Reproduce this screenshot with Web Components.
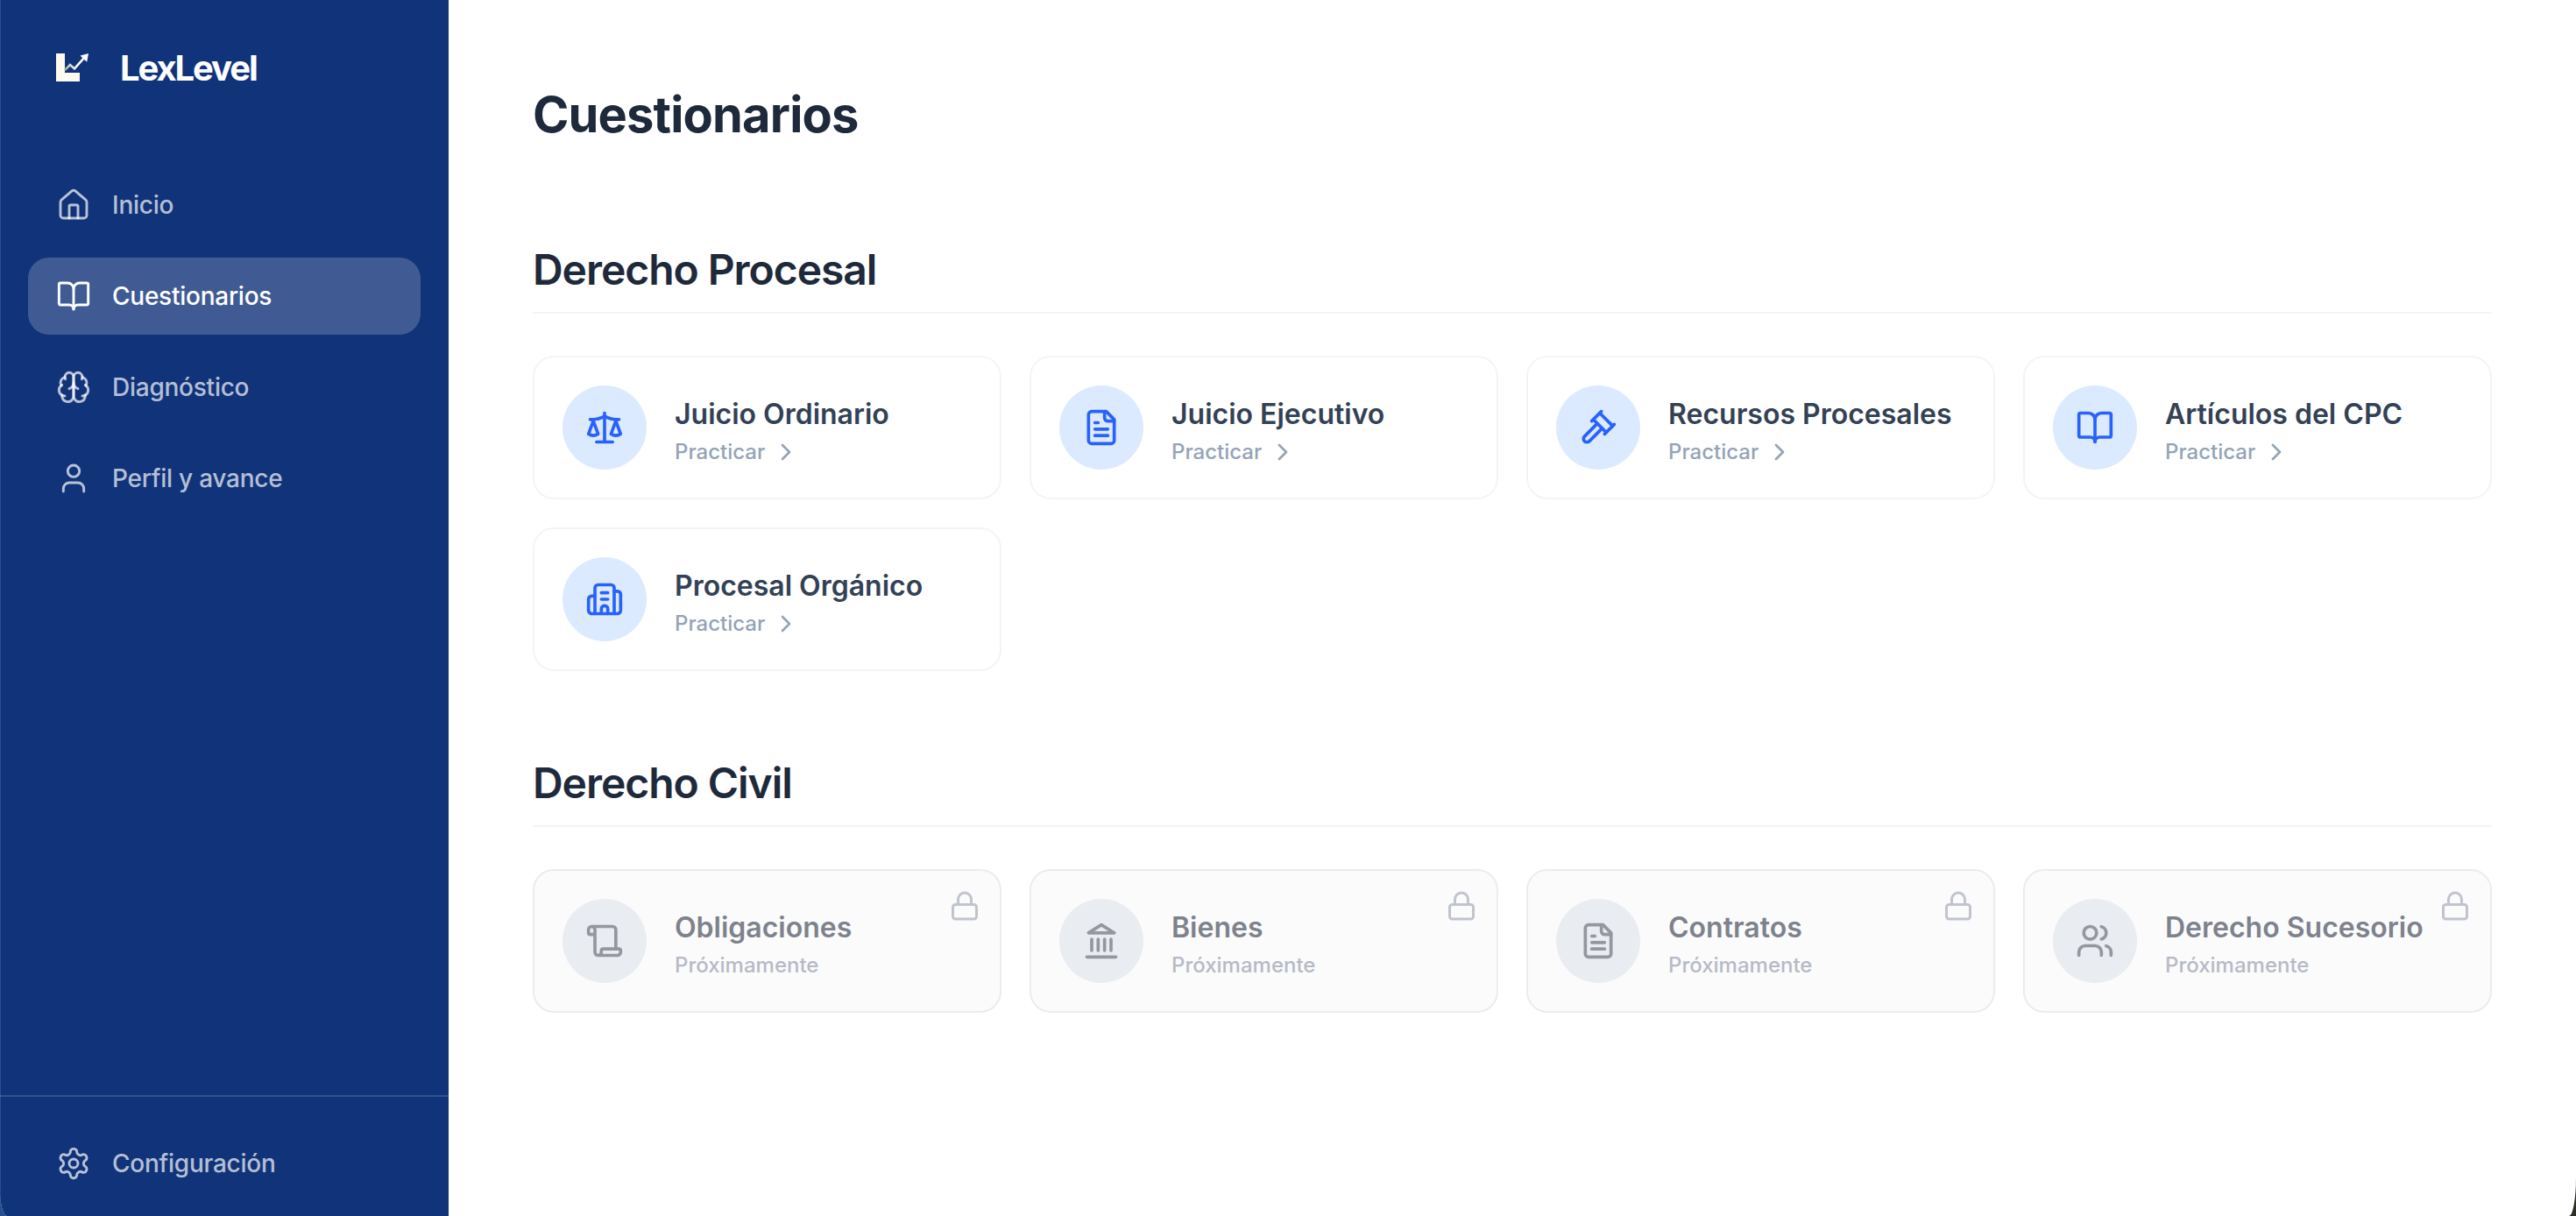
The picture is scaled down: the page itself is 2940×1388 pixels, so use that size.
<!DOCTYPE html>
<html lang="es">
<head>
<meta charset="utf-8">
<title>LexLevel</title>
<style>
  html, body { margin: 0; height: 100%; }
  html { background: linear-gradient(90deg, #23508c 0, #23508c 20px, #2a3024 20px); }
  body { font-family: "Inter", "Liberation Sans", sans-serif; }
</style>
</head>
<body>
<lex-app>
  <lex-sidebar slot="sidebar">
    <nav-item icon="house">Inicio</nav-item>
    <nav-item icon="book" active>Cuestionarios</nav-item>
    <nav-item icon="brain">Diagnóstico</nav-item>
    <nav-item icon="user">Perfil y avance</nav-item>
    <nav-item slot="footer" icon="settings">Configuración</nav-item>
  </lex-sidebar>

  <page-title>Cuestionarios</page-title>

  <course-section heading="Derecho Procesal">
    <course-card icon="scale" title-text="Juicio Ordinario"></course-card>
    <course-card icon="file" title-text="Juicio Ejecutivo"></course-card>
    <course-card icon="gavel" title-text="Recursos Procesales"></course-card>
    <course-card icon="book" title-text="Artículos del CPC"></course-card>
    <course-card icon="building" title-text="Procesal Orgánico"></course-card>
  </course-section>

  <course-section heading="Derecho Civil">
    <course-card locked icon="scroll" title-text="Obligaciones"></course-card>
    <course-card locked icon="landmark" title-text="Bienes"></course-card>
    <course-card locked icon="file" title-text="Contratos"></course-card>
    <course-card locked icon="users" title-text="Derecho Sucesorio"></course-card>
  </course-section>
</lex-app>

<script>
// lucide style icon bodies, 24x24 viewbox
const ICONS = {
  house: '<path d="M15 21v-8a1 1 0 0 0-1-1h-4a1 1 0 0 0-1 1v8"/><path d="M3 10a2 2 0 0 1 .709-1.528l7-5.999a2 2 0 0 1 2.582 0l7 5.999A2 2 0 0 1 21 10v9a2 2 0 0 1-2 2H5a2 2 0 0 1-2-2z"/>',
  book: '<path d="M12 7v14"/><path d="M3 18a1 1 0 0 1-1-1V4a1 1 0 0 1 1-1h5a4 4 0 0 1 4 4 4 4 0 0 1 4-4h5a1 1 0 0 1 1 1v13a1 1 0 0 1-1 1h-6a3 3 0 0 0-3 3 3 3 0 0 0-3-3z"/>',
  brain: '<path d="M12 5a3 3 0 1 0-5.997.125 4 4 0 0 0-2.526 5.77 4 4 0 0 0 .556 6.588A4 4 0 1 0 12 18Z"/><path d="M12 5a3 3 0 1 1 5.997.125 4 4 0 0 1 2.526 5.77 4 4 0 0 1-.556 6.588A4 4 0 1 1 12 18Z"/><path d="M15 13a4.5 4.5 0 0 1-3-4 4.5 4.5 0 0 1-3 4"/><path d="M17.599 6.5a3 3 0 0 0 .399-1.375"/><path d="M6.003 5.125A3 3 0 0 0 6.401 6.5"/><path d="M3.477 10.896a4 4 0 0 1 .585-.396"/><path d="M19.938 10.5a4 4 0 0 1 .585.396"/><path d="M6 18a4 4 0 0 1-1.967-.516"/><path d="M19.967 17.484A4 4 0 0 1 18 18"/>',
  user: '<path d="M19 21v-2a4 4 0 0 0-4-4H9a4 4 0 0 0-4 4v2"/><circle cx="12" cy="7" r="4"/>',
  settings: '<path d="M12.22 2h-.44a2 2 0 0 0-2 2v.18a2 2 0 0 1-1 1.73l-.43.25a2 2 0 0 1-2 0l-.15-.08a2 2 0 0 0-2.73.73l-.22.38a2 2 0 0 0 .73 2.73l.15.1a2 2 0 0 1 1 1.72v.51a2 2 0 0 1-1 1.74l-.15.09a2 2 0 0 0-.73 2.73l.22.38a2 2 0 0 0 2.73.73l.15-.08a2 2 0 0 1 2 0l.43.25a2 2 0 0 1 1 1.73V20a2 2 0 0 0 2 2h.44a2 2 0 0 0 2-2v-.18a2 2 0 0 1 1-1.73l.43-.25a2 2 0 0 1 2 0l.15.08a2 2 0 0 0 2.73-.73l.22-.39a2 2 0 0 0-.73-2.73l-.15-.08a2 2 0 0 1-1-1.74v-.5a2 2 0 0 1 1-1.74l.15-.09a2 2 0 0 0 .73-2.73l-.22-.38a2 2 0 0 0-2.73-.73l-.15.08a2 2 0 0 1-2 0l-.43-.25a2 2 0 0 1-1-1.73V4a2 2 0 0 0-2-2z"/><circle cx="12" cy="12" r="3"/>',
  scale: '<path d="m16 16 3-8 3 8c-.87.65-1.92 1-3 1s-2.13-.35-3-1Z"/><path d="m2 16 3-8 3 8c-.87.65-1.92 1-3 1s-2.13-.35-3-1Z"/><path d="M7 21h10"/><path d="M12 3v18"/><path d="M3 7h2c2 0 5-1 7-2 2 1 5 2 7 2h2"/>',
  file: '<path d="M15 2H6a2 2 0 0 0-2 2v16a2 2 0 0 0 2 2h12a2 2 0 0 0 2-2V7Z"/><path d="M14 2v4a2 2 0 0 0 2 2h4"/><path d="M10 9H8"/><path d="M16 13H8"/><path d="M16 17H8"/>',
  gavel: '<path d="m14.5 12.5-8 8a2.119 2.119 0 1 1-3-3l8-8"/><path d="m16 16 6-6"/><path d="m8 8 6-6"/><path d="m9 7 8 8"/><path d="m21 11-8-8"/>',
  building: '<path d="M10 12h4"/><path d="M10 8h4"/><path d="M14 21v-3a2 2 0 0 0-4 0v3"/><path d="M6 10H4a2 2 0 0 0-2 2v7a2 2 0 0 0 2 2h16a2 2 0 0 0 2-2V9a2 2 0 0 0-2-2h-2"/><path d="M6 21V5a2 2 0 0 1 2-2h8a2 2 0 0 1 2 2v16"/>',
  scroll: '<path d="M19 17V5a2 2 0 0 0-2-2H4"/><path d="M8 21h12a2 2 0 0 0 2-2v-1a1 1 0 0 0-1-1H11a1 1 0 0 0-1 1v1a2 2 0 1 1-4 0V5a2 2 0 1 0-4 0v2a1 1 0 0 0 1 1h3"/>',
  landmark: '<path d="M3 22h18"/><path d="M6 18v-7"/><path d="M10 18v-7"/><path d="M14 18v-7"/><path d="M18 18v-7"/><path d="M12 2l8 5H4z"/>',
  users: '<path d="M16 21v-2a4 4 0 0 0-4-4H6a4 4 0 0 0-4 4v2"/><path d="M16 3.128a4 4 0 0 1 0 7.744"/><path d="M22 21v-2a4 4 0 0 0-3-3.87"/><circle cx="9" cy="7" r="4"/>',
  lock: '<rect width="18" height="11" x="3" y="11" rx="2" ry="2"/><path d="M7 11V7a5 5 0 0 1 10 0v4"/>',
  chevron: '<path d="m9 18 6-6-6-6"/>'
};

class LexIcon extends HTMLElement {
  constructor() {
    super();
    const size = this.getAttribute("size") || 40;
    const weight = this.getAttribute("weight") || 2;
    this.attachShadow({ mode: "open" });
    this.shadowRoot.innerHTML = `
      <style>
        :host { display: block; flex: none; width: ${size}px; height: ${size}px; }
        svg { display: block; width: 100%; height: 100%; }
      </style>
      <svg viewBox="0 0 24 24" fill="none" stroke="currentColor" stroke-width="${weight}"
           stroke-linecap="round" stroke-linejoin="round">${ICONS[this.getAttribute("name")]}</svg>`;
  }
}
customElements.define("lex-icon", LexIcon);

const navTemplate = document.createElement("template");
navTemplate.innerHTML = `
  <style>
    :host {
      display: flex;
      align-items: center;
      gap: 24px;
      height: 88px;
      box-sizing: border-box;
      padding: 0 32px;
      border-radius: 24px;
      color: rgba(255, 255, 255, 0.7);
      font-size: 28px;
      font-weight: 500;
      letter-spacing: -0.25px;
    }
    :host([active]) {
      background: rgba(255, 255, 255, 0.2);
      color: #fff;
    }
  </style>
  <lex-icon id="icon" weight="1.75"></lex-icon>
  <slot></slot>
`;

class NavItem extends HTMLElement {
  constructor() {
    super();
    const content = navTemplate.content.cloneNode(true);
    content.querySelector("#icon").setAttribute("name", this.getAttribute("icon"));
    this.attachShadow({ mode: "open" });
    this.shadowRoot.appendChild(content);
  }
}
customElements.define("nav-item", NavItem);

const sidebarTemplate = document.createElement("template");
sidebarTemplate.innerHTML = `
  <style>
    :host {
      display: flex;
      flex-direction: column;
      width: 512px;
      flex: none;
      background: #11337a;
      box-shadow: inset 1px 0 0 #2f4c8b;
    }
    .brand {
      display: flex;
      align-items: center;
      gap: 36px;
      height: 154px;
      padding-left: 64px;
      color: #fff;
      font-size: 40px;
      font-weight: 700;
      letter-spacing: -2.1px;
    }
    .brand svg { display: block; flex: none; }
    nav {
      flex: 1;
      display: flex;
      flex-direction: column;
      gap: 16px;
      padding: 36px 32px 0;
    }
    .foot {
      border-top: 2px solid rgba(255, 255, 255, 0.15);
      padding: 32px 32px 16px;
    }
  </style>
  <div class="brand">
    <svg width="37" height="32" viewBox="0 0 37 32">
      <defs>
        <linearGradient id="trend" x1="10" y1="19" x2="22" y2="12" gradientUnits="userSpaceOnUse">
          <stop offset="0" stop-color="#9d9f97"/>
          <stop offset="1" stop-color="#fff"/>
        </linearGradient>
      </defs>
      <path d="M0 0h10v22h17v10H0z" fill="#fffaf0"/>
      <path d="M10 19l6-6 5 4.4L32 5" fill="none" stroke="url(#trend)" stroke-width="2.6"/>
      <path d="M27.5 2.4L37 0l-1.8 9.8z" fill="#fff"/>
    </svg>
    <span>LexLevel</span>
  </div>
  <nav><slot></slot></nav>
  <div class="foot"><slot name="footer"></slot></div>
`;

class LexSidebar extends HTMLElement {
  constructor() {
    super();
    this.attachShadow({ mode: "open" });
    this.shadowRoot.appendChild(sidebarTemplate.content.cloneNode(true));
  }
}
customElements.define("lex-sidebar", LexSidebar);

const titleTemplate = document.createElement("template");
titleTemplate.innerHTML = `
  <style>
    :host {
      display: block;
      padding-bottom: 14px;
      color: #1e293b;
      font-size: 56px;
      font-weight: 700;
      line-height: 70px;
      letter-spacing: -0.85px;
    }
  </style>
  <slot></slot>
`;

class PageTitle extends HTMLElement {
  constructor() {
    super();
    this.attachShadow({ mode: "open" });
    this.shadowRoot.appendChild(titleTemplate.content.cloneNode(true));
  }
}
customElements.define("page-title", PageTitle);

const sectionTemplate = document.createElement("template");
sectionTemplate.innerHTML = `
  <style>
    :host { display: block; margin-top: 96px; }
    h2 {
      margin: 0 0 48px;
      padding-bottom: 16px;
      border-bottom: 2px solid #f1f5f9;
      color: #1e293b;
      font-size: 48px;
      font-weight: 600;
      line-height: 64px;
      letter-spacing: -1.05px;
    }
    .grid {
      display: grid;
      grid-template-columns: repeat(4, 1fr);
      gap: 32px;
    }
  </style>
  <h2 id="heading"></h2>
  <div class="grid"><slot></slot></div>
`;

class CourseSection extends HTMLElement {
  constructor() {
    super();
    this.attachShadow({ mode: "open" });
    this.shadowRoot.appendChild(sectionTemplate.content.cloneNode(true));
    this.shadowRoot.querySelector("#heading").textContent = this.getAttribute("heading");
  }
}
customElements.define("course-section", CourseSection);

const cardTemplate = document.createElement("template");
cardTemplate.innerHTML = `
  <style>
    :host {
      display: flex;
      align-items: center;
      gap: 32px;
      position: relative;
      box-sizing: border-box;
      padding: 32px;
      border: 2px solid #f1f5f9;
      border-radius: 24px;
      background: #fff;
    }
    .badge {
      display: flex;
      align-items: center;
      justify-content: center;
      flex: none;
      width: 96px;
      height: 96px;
      border-radius: 50%;
      background: #dbeafe;
      color: #2962fb;
    }
    .text { padding-top: 9px; }
    .name {
      color: #334155;
      font-size: 32px;
      font-weight: 600;
      line-height: 40px;
      white-space: nowrap;
    }
    .sub {
      display: flex;
      align-items: center;
      gap: 8px;
      margin-top: 7px;
      color: #94a3b8;
      font-size: 24px;
      font-weight: 500;
      line-height: 32px;
    }
    .lock { display: none; position: absolute; top: 22px; right: 22px; color: #c0c4cd; }
    :host([locked]) { background: #fbfbfc; border-color: #e9ecf0; }
    :host([locked]) .badge { background: #e9ecf0; color: #94979f; }
    :host([locked]) .name { color: #7e828c; }
    :host([locked]) .sub { color: #b6bac5; }
    :host([locked]) .sub lex-icon { display: none; }
    :host([locked]) .lock { display: block; }
  </style>
  <div class="badge"><lex-icon id="icon" size="44"></lex-icon></div>
  <div class="text">
    <div class="name" id="name"></div>
    <div class="sub"><span id="sub"></span><lex-icon name="chevron" size="32"></lex-icon></div>
  </div>
  <lex-icon class="lock" name="lock" size="36"></lex-icon>
`;

class CourseCard extends HTMLElement {
  constructor() {
    super();
    const content = cardTemplate.content.cloneNode(true);
    content.querySelector("#icon").setAttribute("name", this.getAttribute("icon"));
    content.querySelector("#name").textContent = this.getAttribute("title-text");
    content.querySelector("#sub").textContent = this.hasAttribute("locked") ? "Próximamente" : "Practicar";
    this.attachShadow({ mode: "open" });
    this.shadowRoot.appendChild(content);
  }
}
customElements.define("course-card", CourseCard);

const appTemplate = document.createElement("template");
appTemplate.innerHTML = `
  <style>
    :host {
      display: flex;
      height: 1388px;
      overflow: hidden;
      background: #fff;
      border-bottom-left-radius: 8px 30px;
      border-bottom-right-radius: 8px 44px;
    }
    main { flex: 1; min-width: 0; padding: 96px 96px 0; }
  </style>
  <slot name="sidebar"></slot>
  <main><slot></slot></main>
`;

class LexApp extends HTMLElement {
  constructor() {
    super();
    this.attachShadow({ mode: "open" });
    this.shadowRoot.appendChild(appTemplate.content.cloneNode(true));
  }
}
customElements.define("lex-app", LexApp);
</script>
</body>
</html>
